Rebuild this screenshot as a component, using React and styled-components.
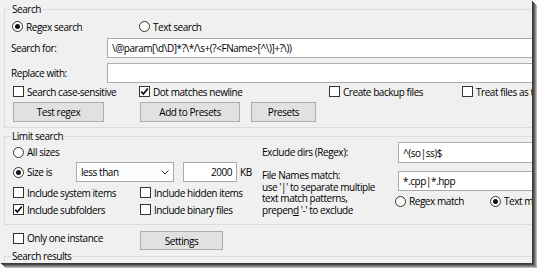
import React from "react";
import styled, { createGlobalStyle } from "styled-components";

const GlobalStyle = createGlobalStyle`
  html, body { margin: 0; padding: 0; background: #ffffff; }
  body {
    font-family: "Open Sans", "Noto Sans", sans-serif;
    font-size: 10px;
    letter-spacing: -0.45px;
    color: #000;
  }
  * { box-sizing: border-box; }
`;

const Page = styled.div`
  width: 537px;
  height: 268px;
  overflow: hidden;
`;

const Window = styled.div`
  width: 532px;
  height: 263px;
  background: #f0f0f0;
  overflow: hidden;
  padding: 3px 0 0 4px;
  display: flex;
  flex-direction: column;
  box-shadow: 1px 1px 0 #3a3a3a, 2px 2px 0 #4a4a4a, 3px 3px 0 #6a6a6a,
    4px 4px 0 #8e8e8e, 5px 5px 0 #b5b5b5;
`;

const Group = styled.fieldset`
  margin: ${(p) => p.$mt || 0}px 0 0 0;
  padding: 0 0 ${(p) => p.$pb || 0}px 0;
  border: 1px solid #dcdcdc;
  border-right: none;
  ${(p) => (p.$open ? "border-bottom: none; height: 40px;" : "")}
  width: 600px;
  min-width: 0;
  flex-shrink: 0;
`;

const Legend = styled.legend`
  margin-left: 6px;
  padding: 0 1px;
  height: 12px;
  line-height: 12px;
`;

const Row = styled.div`
  display: grid;
  grid-template-columns: ${(p) => p.$cols};
  align-items: center;
  height: ${(p) => p.$h}px;
  margin-top: ${(p) => p.$mt || 0}px;
  padding-left: ${(p) => p.$pl || 0}px;
`;

const Label = styled.label`
  display: flex;
  align-items: center;
  gap: 3px;
  white-space: nowrap;
`;

const Circle = styled.span`
  width: 11px;
  height: 11px;
  border-radius: 50%;
  border: 1px solid #333;
  background: #fff;
  display: inline-flex;
  align-items: center;
  justify-content: center;
  flex-shrink: 0;
  &::after {
    content: "";
    width: 5px;
    height: 5px;
    border-radius: 50%;
    background: ${(p) => (p.$on ? "#111" : "transparent")};
  }
`;

const Box = styled.span`
  width: 11px;
  height: 11px;
  border: 1px solid #333;
  background: #fff;
  display: inline-flex;
  align-items: center;
  justify-content: center;
  flex-shrink: 0;
`;

const TextBox = styled.div`
  height: ${(p) => p.$h || 20}px;
  background: #fff;
  border: 1px solid #acacac;
  display: flex;
  align-items: center;
  justify-content: ${(p) => (p.$right ? "flex-end" : "flex-start")};
  padding: 0 4px;
  white-space: nowrap;
  overflow: hidden;
`;

const Select = styled.div`
  height: 20px;
  background: #fdfdfd;
  border: 1px solid #acacac;
  display: flex;
  align-items: center;
  justify-content: space-between;
  padding: 0 4px 0 4px;
`;

const Button = styled.button`
  height: ${(p) => p.$h || 20}px;
  width: ${(p) => p.$w}px;
  background: #e1e1e1;
  border: 1px solid #adadad;
  font: inherit;
  letter-spacing: inherit;
  color: #000;
  padding: 0;
`;

const LimitBody = styled.div`
  display: grid;
  grid-template-columns: 257px 136px 1fr;
  padding-bottom: 6px;
`;

const LeftCol = styled.div`
  display: flex;
  flex-direction: column;
  padding-left: 8px;
`;

const SizeRow = styled.div`
  display: grid;
  grid-template-columns: 63px 98px 63px auto;
  align-items: center;
  height: 20px;
`;

const Kb = styled.span`
  padding-left: 3px;
`;

const SizeInput = styled(TextBox)`
  margin-left: 9px;
  width: 54px;
  height: 20px;
`;

const RightLabel = styled.div`
  line-height: ${(p) => (p.$multi ? "11.5px" : "20px")};
  margin-top: ${(p) => p.$mt || 0}px;
`;

const RightField = styled.div`
  margin-top: ${(p) => p.$mt || 0}px;
  display: flex;
  flex-direction: column;
`;

const MatchRow = styled.div`
  display: grid;
  grid-template-columns: 95px auto;
  align-items: center;
  margin-left: -3px;
  height: 18px;
  margin-top: 1px;
`;

const BottomRow = styled.div`
  display: grid;
  grid-template-columns: 127px auto;
  align-items: start;
  padding-left: 9px;
  margin-top: 6px;
  height: 19px;
`;

const Check = () => (
  <svg width="9" height="9" viewBox="0 0 9 9">
    <path d="M1.3 4.6 L3.4 7 L7.8 1.4" fill="none" stroke="#000" strokeWidth="1.6" />
  </svg>
);

const Radio = ({ on, children }) => (
  <Label>
    <Circle $on={on} />
    {children}
  </Label>
);

const CheckBox = ({ on, children }) => (
  <Label>
    <Box>{on && <Check />}</Box>
    {children}
  </Label>
);

const Chevron = () => (
  <svg width="8" height="5" viewBox="0 0 8 5">
    <path d="M0.5 0.5 L4 4 L7.5 0.5" fill="none" stroke="#333" strokeWidth="1" />
  </svg>
);

export default function App() {
  return (
    <Page>
      <GlobalStyle />
      <Window>
        <Group $pb={5}>
          <Legend>Search</Legend>
          <Row $cols="127px auto" $h={23} $pl={7}>
            <Radio on>Regex search</Radio>
            <Radio>Text search</Radio>
          </Row>
          <Row $cols="96px 1fr" $h={20} $pl={6}>
            <span>Search for:</span>
            <TextBox>{"\\@param[\\d\\D]*?\\*/\\s+(?<FName>[^\\)]+?\\))"}</TextBox>
          </Row>
          <Row $cols="96px 1fr" $h={20} $pl={6} $mt={5}>
            <span>Replace with:</span>
            <TextBox />
          </Row>
          <Row $cols="126px 190px 133px auto" $h={17} $pl={8}>
            <CheckBox>Search case-sensitive</CheckBox>
            <CheckBox on>Dot matches newline</CheckBox>
            <CheckBox>Create backup files</CheckBox>
            <CheckBox>Treat files as text</CheckBox>
          </Row>
          <Row $cols="127px 111px auto" $h={20} $pl={8} $mt={2}>
            <Button $w={91}>Test regex</Button>
            <Button $w={100}>Add to Presets</Button>
            <Button $w={65}>Presets</Button>
          </Row>
        </Group>

        <Group $mt={2}>
          <Legend>Limit search</Legend>
          <LimitBody>
            <LeftCol>
              <Row $cols="auto" $h={20}>
                <Radio>All sizes</Radio>
              </Row>
              <SizeRow>
                <Radio on>Size is</Radio>
                <Select>
                  <span>less than</span>
                  <Chevron />
                </Select>
                <SizeInput $right>2000</SizeInput>
                <Kb>KB</Kb>
              </SizeRow>
              <Row $cols="127px auto" $h={17} $mt={2}>
                <CheckBox>Include system items</CheckBox>
                <CheckBox>Include hidden items</CheckBox>
              </Row>
              <Row $cols="127px auto" $h={17}>
                <CheckBox on>Include subfolders</CheckBox>
                <CheckBox>Include binary files</CheckBox>
              </Row>
            </LeftCol>
            <div>
              <RightLabel>Exclude dirs (Regex):</RightLabel>
              <RightLabel $multi $mt={8}>
                File Names match:
                <br />
                use '|' to separate multiple
                <br />
                text match patterns,
                <br />
                prepen<u>d</u> '-' to exclude
              </RightLabel>
            </div>
            <div>
              <TextBox $h={21}>^(so|ss)$</TextBox>
              <RightField $mt={8}>
                <TextBox>*.cpp|*.hpp</TextBox>
                <MatchRow>
                  <Radio>Regex match</Radio>
                  <Radio on>Text match</Radio>
                </MatchRow>
              </RightField>
            </div>
          </LimitBody>
        </Group>

        <BottomRow>
          <CheckBox>Only one instance</CheckBox>
          <Button $w={83} $h={19}>Settings</Button>
        </BottomRow>

        <Group $open>
          <Legend>Search results</Legend>
        </Group>
      </Window>
    </Page>
  );
}
